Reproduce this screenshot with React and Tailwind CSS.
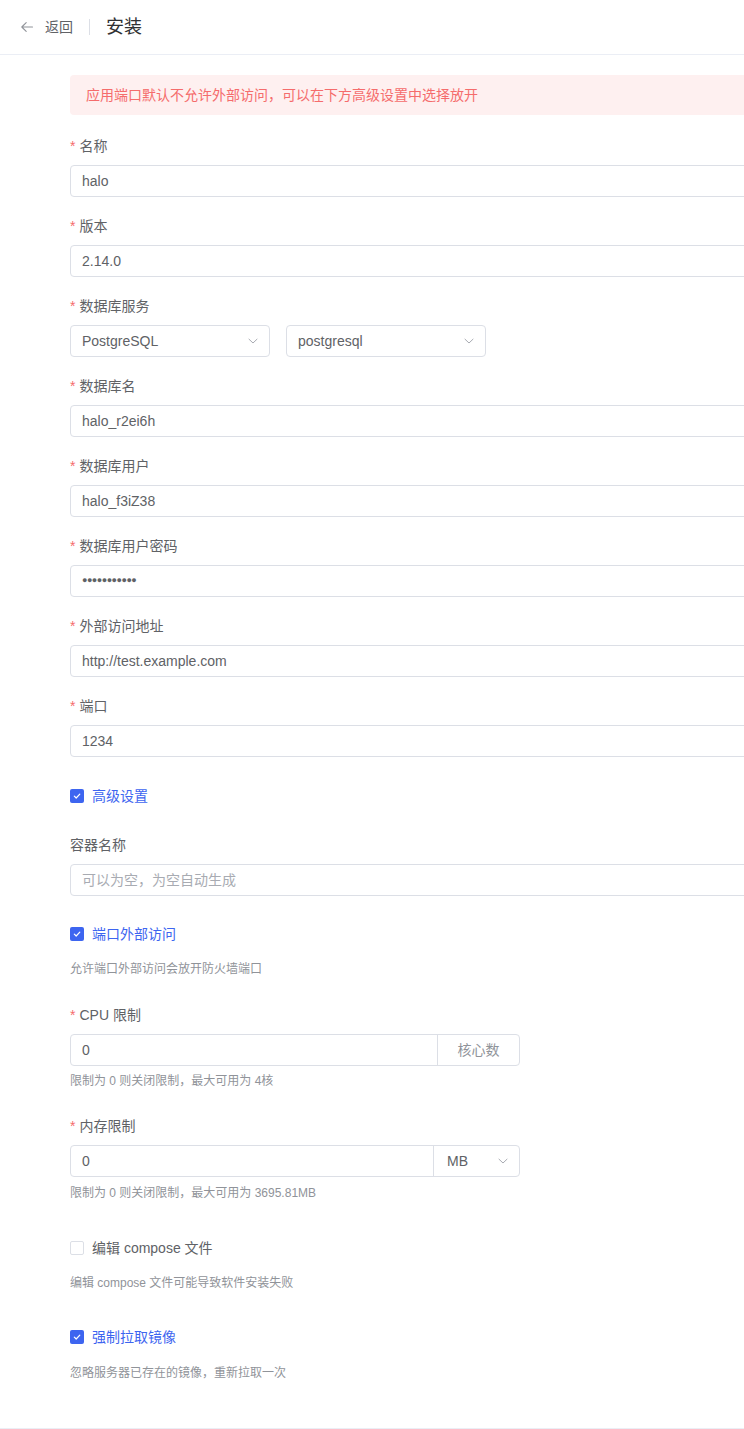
import React from 'react'

const font = { fontFamily: '"Liberation Sans", "Noto Sans CJK SC", sans-serif' }

function Chevron() {
  return (
    <svg width="12" height="12" viewBox="0 0 12 12" fill="none">
      <path d="M2 4.2 6 8l4-3.8" stroke="#a8abb2" strokeWidth="1" strokeLinecap="round" strokeLinejoin="round" />
    </svg>
  )
}

function Label({ children, required = true }) {
  return (
    <div className="mb-2 flex h-[22px] items-center text-[14px] leading-[22px] text-[#606266]">
      {required && <span className="mr-1 text-[#f56c6c]">*</span>}
      {children}
    </div>
  )
}

function TextInput({ value, placeholder }) {
  return (
    <div className="flex h-8 items-center rounded-[4px] border border-[#dcdfe6] bg-white px-[11px] text-[14px]">
      {value ? <span className="text-[#606266]">{value}</span> : <span className="text-[#a8abb2]">{placeholder}</span>}
    </div>
  )
}

function Field({ label, value }) {
  return (
    <div className="mb-[18px]">
      <Label>{label}</Label>
      <TextInput value={value} />
    </div>
  )
}

function Select({ value }) {
  return (
    <div className="flex h-8 w-[200px] items-center justify-between rounded-[4px] border border-[#dcdfe6] bg-white pl-[11px] pr-[10px] text-[14px] text-[#606266]">
      <span>{value}</span>
      <Chevron />
    </div>
  )
}

function Checkbox({ checked, children }) {
  return (
    <div className="flex items-center gap-2 text-[14px]">
      {checked ? (
        <span className="flex h-[14px] w-[14px] items-center justify-center rounded-[2px] bg-[#3d65f0]">
          <svg width="10" height="10" viewBox="0 0 10 10" fill="none">
            <path d="M2.3 5.1 4.2 7l3.6-3.8" stroke="white" strokeWidth="1.2" strokeLinecap="round" strokeLinejoin="round" />
          </svg>
        </span>
      ) : (
        <span className="h-[14px] w-[14px] rounded-[2px] border border-[#dcdfe6] bg-white" />
      )}
      <span className={checked ? 'text-[#3d65f0]' : 'text-[#606266]'}>{children}</span>
    </div>
  )
}

function Help({ children, className = '' }) {
  return <div className={`h-5 text-[12px] leading-5 text-[#909399] ${className}`}>{children}</div>
}

export default function App() {
  return (
    <div className="min-h-[1429px] w-[744px] overflow-hidden bg-white" style={font}>
      <header className="flex h-[55px] items-center border-b border-[#ebeef5] pl-[19px]">
        <svg width="16" height="16" viewBox="0 0 16 16" fill="none">
          <path d="M13.5 8H3M7.2 3.6 2.8 8l4.4 4.4" stroke="#909399" strokeWidth="1.1" strokeLinecap="round" strokeLinejoin="round" />
        </svg>
        <span className="ml-[10px] text-[14px] text-[#606266]">返回</span>
        <span className="mx-4 h-4 w-px bg-[#dcdfe6]" />
        <span className="text-[18px] text-[#303133]">安装</span>
      </header>

      <div className="w-[840px] pl-[70px] pt-5">
        <div className="mb-5 flex h-10 items-center rounded-[4px] bg-[#fef0f0] pl-4 text-[14px] text-[#f56c6c]">
          应用端口默认不允许外部访问，可以在下方高级设置中选择放开
        </div>

        <Field label="名称" value="halo" />
        <Field label="版本" value="2.14.0" />
        <div className="mb-[18px]">
          <Label>数据库服务</Label>
          <div className="flex gap-4">
            <Select value="PostgreSQL" />
            <Select value="postgresql" />
          </div>
        </div>
        <Field label="数据库名" value="halo_r2ei6h" />
        <Field label="数据库用户" value="halo_f3iZ38" />
        <div className="mb-[18px]">
          <Label>数据库用户密码</Label>
          <div className="flex h-8 items-center rounded-[4px] border border-[#dcdfe6] bg-white px-[11px] text-[9px] tracking-[-0.5px] text-[#606266]">
            ●●●●●●●●●●●
          </div>
        </div>
        <Field label="外部访问地址" value="http://test.example.com" />
        <Field label="端口" value="1234" />

        <div className="flex h-[42px] items-center">
          <Checkbox checked>高级设置</Checkbox>
        </div>

        <div className="mb-[18px] mt-[17px]">
          <Label required={false}>容器名称</Label>
          <TextInput placeholder="可以为空，为空自动生成" />
        </div>

        <div className="flex h-10 items-center">
          <Checkbox checked>端口外部访问</Checkbox>
        </div>
        <Help className="mt-[5px]">允许端口外部访问会放开防火墙端口</Help>

        <div className="mt-[25px]">
          <Label>CPU 限制</Label>
          <div className="flex h-8 w-[450px] rounded-[4px] border border-[#dcdfe6] text-[14px]">
            <div className="flex flex-1 items-center px-[11px] text-[#606266]">0</div>
            <div className="flex w-[82px] items-center justify-center border-l border-[#dcdfe6] text-[#909399]">核心数</div>
          </div>
          <Help className="mt-[5px]">限制为 0 则关闭限制，最大可用为 4核</Help>
        </div>

        <div className="mt-6">
          <Label>内存限制</Label>
          <div className="flex h-8 w-[450px] rounded-[4px] border border-[#dcdfe6] text-[14px]">
            <div className="flex flex-1 items-center px-[11px] text-[#606266]">0</div>
            <div className="flex w-[86px] items-center justify-between border-l border-[#dcdfe6] pl-[13px] pr-[10px] text-[#606266]">
              <span>MB</span>
              <Chevron />
            </div>
          </div>
          <Help className="mt-[6px]">限制为 0 则关闭限制，最大可用为 3695.81MB</Help>
        </div>

        <div className="mt-[29px] flex h-8 items-center">
          <Checkbox>编辑 compose 文件</Checkbox>
        </div>
        <Help className="mt-[9px]">编辑 compose 文件可能导致软件安装失败</Help>

        <div className="mt-7 flex h-8 items-center">
          <Checkbox checked>强制拉取镜像</Checkbox>
        </div>
        <Help className="mt-[10px]">忽略服务器已存在的镜像，重新拉取一次</Help>
      </div>

      <div className="mt-[45px] border-t border-[#ebeef5]" />
    </div>
  )
}
